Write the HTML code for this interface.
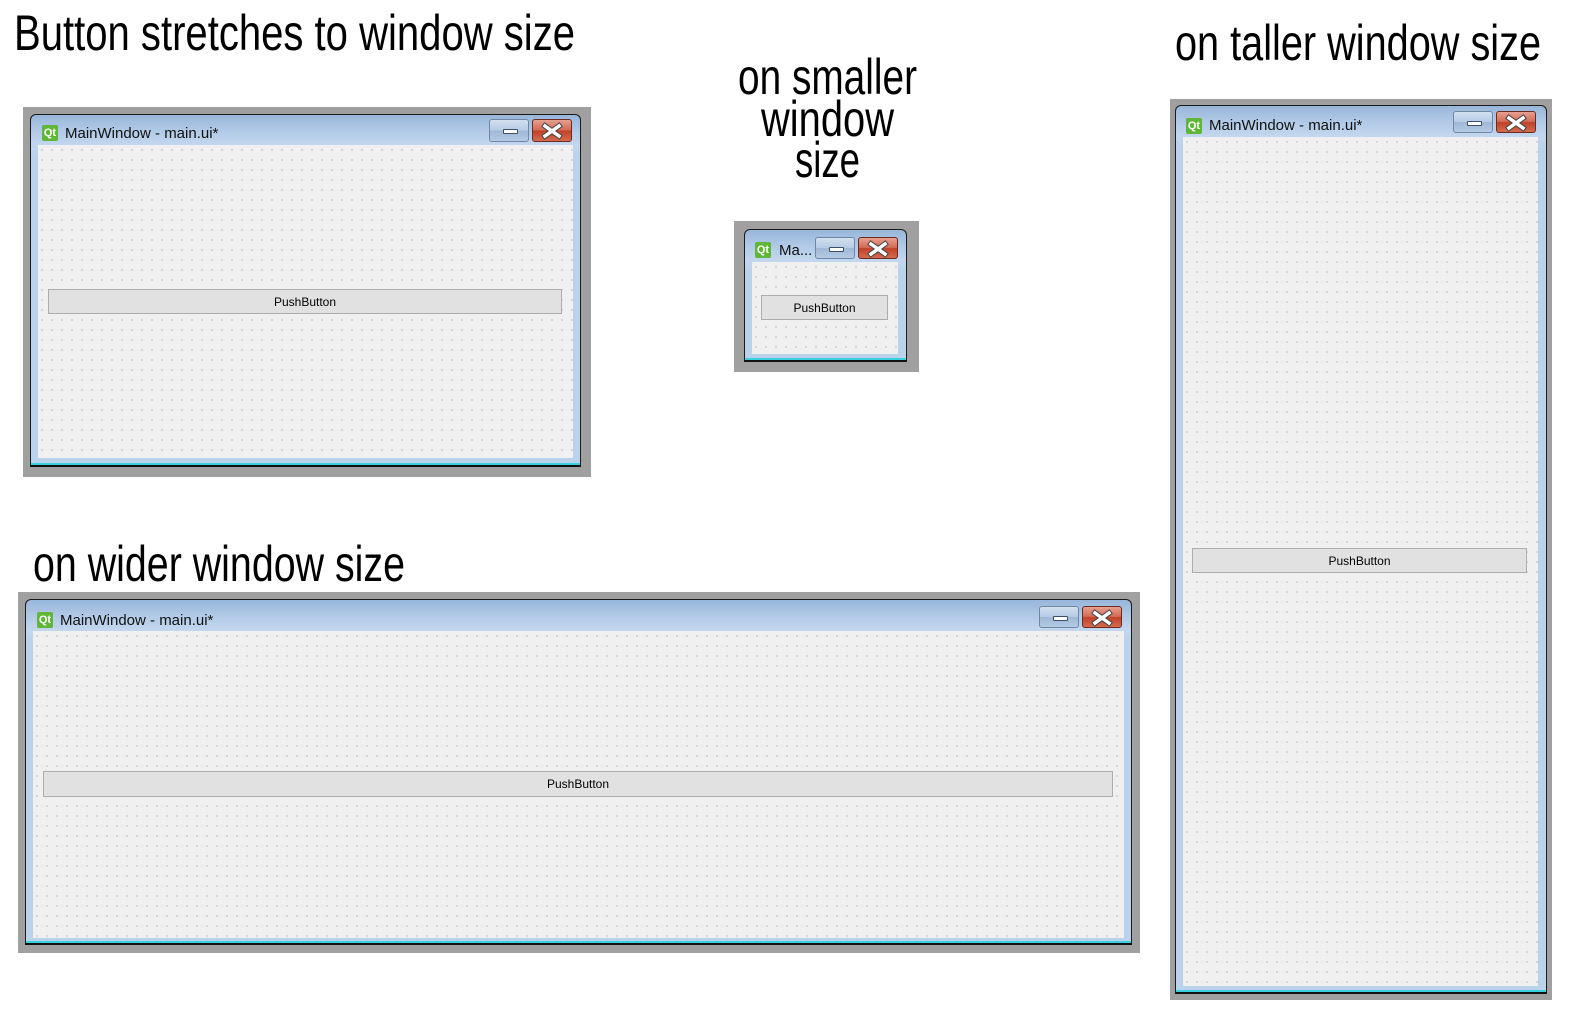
<!DOCTYPE html>
<html><head><meta charset="utf-8"><style>
html,body{margin:0;padding:0;background:#fff;width:1569px;height:1013px;overflow:hidden;position:relative;font-family:"Liberation Sans",sans-serif}
.a{position:absolute;box-sizing:border-box}
.gray{background:#a0a0a0}
.win{border:1px solid #1a1a1a;border-bottom:2px solid #111;border-radius:6px 6px 0 0;background:linear-gradient(#98b6d9 0px,#b4cce8 18px,#c3d7ee 30px,#bad3ec 40px,#bad3ec);box-shadow:inset 0 -2px 0 #3ad0e0}
.client{background-color:#f0f0f0;background-image:radial-gradient(circle at 1px 1px,#b4b4b4 0.6px,transparent 0.9px);background-size:10px 10px;background-position:3px 4px}
.btn{background:#e1e1e1;border:1px solid #adadad;font-size:12px;color:#000;display:flex;align-items:center;justify-content:center}
.min{border:1px solid #6f86a4;border-radius:3px;background:linear-gradient(#d2e0f0,#b5cbe5 50%,#9fb8d6 51%,#b4cae4)}
.min:after{content:"";position:absolute;left:13px;top:9px;width:13px;height:3px;background:#fff;border:1px solid #3c4f6a;border-radius:1px}
.cls{border:1px solid #6b2a22;border-radius:3px;background:linear-gradient(#e7a090,#d46a55 48%,#c0412a 52%,#d56a4d)}
.qt{width:16px;height:16px;background:#5fb637;color:#fff;font:bold 11px "Liberation Sans",sans-serif;line-height:16px;text-align:center;border-radius:2px}
.tt{font-size:15px;color:#111;white-space:nowrap}
</style></head><body>
<svg class="a" style="left:0;top:0" width="1569" height="1013">
<g font-family="Liberation Sans Narrow, Liberation Sans, sans-serif" font-size="50" fill="#000">
<text x="14" y="50" textLength="561" lengthAdjust="spacingAndGlyphs">Button stretches to window size</text>
<text x="1175" y="60" textLength="366" lengthAdjust="spacingAndGlyphs">on taller window size</text>
<text x="33" y="581" textLength="372" lengthAdjust="spacingAndGlyphs">on wider window size</text>
<text x="738" y="94" textLength="179" lengthAdjust="spacingAndGlyphs">on smaller</text>
<text x="761" y="136" textLength="133" lengthAdjust="spacingAndGlyphs">window</text>
<text x="795" y="177" textLength="65" lengthAdjust="spacingAndGlyphs">size</text>
</g></svg>
<svg width="0" height="0" style="position:absolute"><defs><g id="x"><path d="M13 6 L27 16 M27 6 L13 16" stroke="#444" stroke-width="5.5" stroke-linecap="square"/><path d="M13 6 L27 16 M27 6 L13 16" stroke="#fff" stroke-width="3.5" stroke-linecap="square"/></g></defs></svg>

<!-- W1 -->
<div class="a gray" style="left:23px;top:107px;width:568px;height:370px"></div>
<div class="a win" style="left:30px;top:114px;width:551px;height:353px"></div>
<div class="a client" style="left:38px;top:145px;width:535px;height:313px"></div>
<div class="a btn" style="left:48px;top:289px;width:514px;height:25px">PushButton</div>
<div class="a qt" style="left:42px;top:125px">Qt</div>
<div class="a tt" style="left:65px;top:125px">MainWindow - main.ui*</div>
<div class="a min" style="left:489px;top:119px;width:40px;height:23px"></div>
<div class="a cls" style="left:532px;top:119px;width:40px;height:23px"><svg width="40" height="23" style="position:absolute;left:-1px;top:0"><use href="#x"/></svg></div>

<!-- W2 -->
<div class="a gray" style="left:734px;top:221px;width:185px;height:151px"></div>
<div class="a win" style="left:744px;top:229px;width:163px;height:133px"></div>
<div class="a client" style="left:752px;top:262px;width:146px;height:92px"></div>
<div class="a btn" style="left:761px;top:295px;width:127px;height:25px">PushButton</div>
<div class="a qt" style="left:755px;top:242px">Qt</div>
<div class="a tt" style="left:779px;top:242px">Ma...</div>
<div class="a min" style="left:815px;top:237px;width:40px;height:22px"></div>
<div class="a cls" style="left:858px;top:237px;width:40px;height:22px"><svg width="40" height="22" style="position:absolute;left:-1px;top:0"><use href="#x"/></svg></div>

<!-- W3 -->
<div class="a gray" style="left:1170px;top:99px;width:382px;height:901px"></div>
<div class="a win" style="left:1175px;top:105px;width:372px;height:889px"></div>
<div class="a client" style="left:1183px;top:137px;width:355px;height:849px"></div>
<div class="a btn" style="left:1192px;top:548px;width:335px;height:25px">PushButton</div>
<div class="a qt" style="left:1186px;top:118px">Qt</div>
<div class="a tt" style="left:1209px;top:117px">MainWindow - main.ui*</div>
<div class="a min" style="left:1453px;top:111px;width:40px;height:22px"></div>
<div class="a cls" style="left:1496px;top:111px;width:40px;height:22px"><svg width="40" height="22" style="position:absolute;left:-1px;top:0"><use href="#x"/></svg></div>

<!-- W4 -->
<div class="a gray" style="left:18px;top:592px;width:1122px;height:361px"></div>
<div class="a win" style="left:25px;top:599px;width:1107px;height:346px"></div>
<div class="a client" style="left:33px;top:631px;width:1091px;height:307px"></div>
<div class="a btn" style="left:43px;top:771px;width:1070px;height:26px">PushButton</div>
<div class="a qt" style="left:37px;top:612px">Qt</div>
<div class="a tt" style="left:60px;top:612px">MainWindow - main.ui*</div>
<div class="a min" style="left:1039px;top:606px;width:40px;height:22px"></div>
<div class="a cls" style="left:1082px;top:606px;width:40px;height:22px"><svg width="40" height="22" style="position:absolute;left:-1px;top:0"><use href="#x"/></svg></div>
</body></html>
